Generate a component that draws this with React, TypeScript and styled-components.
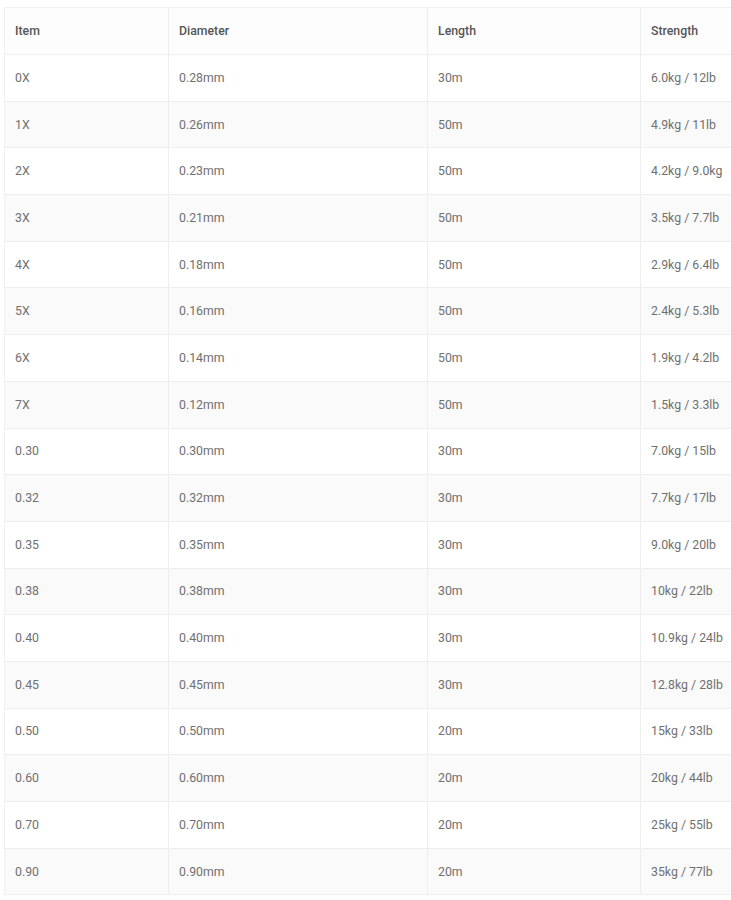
import styled, { createGlobalStyle } from "styled-components";

const GlobalStyle = createGlobalStyle`
  html, body {
    margin: 0;
    padding: 0;
    background: #ffffff;
    overflow: hidden;
  }
  body {
    font-family: Roboto, "Liberation Sans", Arial, sans-serif;
  }
`;

type Row = {
  item: string;
  diameter: string;
  length: string;
  strength: string;
};

const rows: Row[] = [
  { item: "0X", diameter: "0.28mm", length: "30m", strength: "6.0kg / 12lb" },
  { item: "1X", diameter: "0.26mm", length: "50m", strength: "4.9kg / 11lb" },
  { item: "2X", diameter: "0.23mm", length: "50m", strength: "4.2kg / 9.0kg" },
  { item: "3X", diameter: "0.21mm", length: "50m", strength: "3.5kg / 7.7lb" },
  { item: "4X", diameter: "0.18mm", length: "50m", strength: "2.9kg / 6.4lb" },
  { item: "5X", diameter: "0.16mm", length: "50m", strength: "2.4kg / 5.3lb" },
  { item: "6X", diameter: "0.14mm", length: "50m", strength: "1.9kg / 4.2lb" },
  { item: "7X", diameter: "0.12mm", length: "50m", strength: "1.5kg / 3.3lb" },
  { item: "0.30", diameter: "0.30mm", length: "30m", strength: "7.0kg / 15lb" },
  { item: "0.32", diameter: "0.32mm", length: "30m", strength: "7.7kg / 17lb" },
  { item: "0.35", diameter: "0.35mm", length: "30m", strength: "9.0kg / 20lb" },
  { item: "0.38", diameter: "0.38mm", length: "30m", strength: "10kg / 22lb" },
  { item: "0.40", diameter: "0.40mm", length: "30m", strength: "10.9kg / 24lb" },
  { item: "0.45", diameter: "0.45mm", length: "30m", strength: "12.8kg / 28lb" },
  { item: "0.50", diameter: "0.50mm", length: "20m", strength: "15kg / 33lb" },
  { item: "0.60", diameter: "0.60mm", length: "20m", strength: "20kg / 44lb" },
  { item: "0.70", diameter: "0.70mm", length: "20m", strength: "25kg / 55lb" },
  { item: "0.90", diameter: "0.90mm", length: "20m", strength: "35kg / 77lb" },
];

const App = () => {
  return (
    <Page>
      <GlobalStyle />
      <SpecTable>
        <colgroup>
          <col style={{ width: 164 }} />
          <col style={{ width: 259 }} />
          <col style={{ width: 213 }} />
          <col style={{ width: 110 }} />
        </colgroup>
        <thead>
          <HeadRow>
            <HeadCell>Item</HeadCell>
            <HeadCell>Diameter</HeadCell>
            <HeadCell>Length</HeadCell>
            <HeadCell>Strength</HeadCell>
          </HeadRow>
        </thead>
        <tbody>
          {rows.map((row, i) => (
            <BodyRow key={row.item} $striped={i % 2 === 1}>
              <Cell>{row.item}</Cell>
              <Cell>{row.diameter}</Cell>
              <Cell>{row.length}</Cell>
              <Cell>{row.strength}</Cell>
            </BodyRow>
          ))}
        </tbody>
      </SpecTable>
    </Page>
  );
};

const Page = styled.div`
  padding: 7px 0 0 4px;
  width: 760px;
`;

const SpecTable = styled.table`
  border-collapse: collapse;
  table-layout: fixed;
  width: 746px;
  border-top: 1px solid #f0f0f0;
  border-left: 1px solid #f0f0f0;
`;

const HeadRow = styled.tr`
  height: 47px;
  background: #fdfdfd;
`;

const HeadCell = styled.th`
  text-align: left;
  font-weight: 500;
  font-size: 12.3px;
  color: #555555;
  padding: 0 10px;
  border-right: 1px solid #eeeeee;
  border-bottom: 1px solid #eeeeee;
`;

const BodyRow = styled.tr<{ $striped: boolean }>`
  height: 46.7px;
  background: ${(p) => (p.$striped ? "#fafafa" : "#ffffff")};
`;

const Cell = styled.td`
  font-size: 12.3px;
  color: #707070;
  padding: 0 10px;
  white-space: nowrap;
  border-right: 1px solid #eeeeee;
  border-bottom: 1px solid #eeeeee;
`;

export default App;
